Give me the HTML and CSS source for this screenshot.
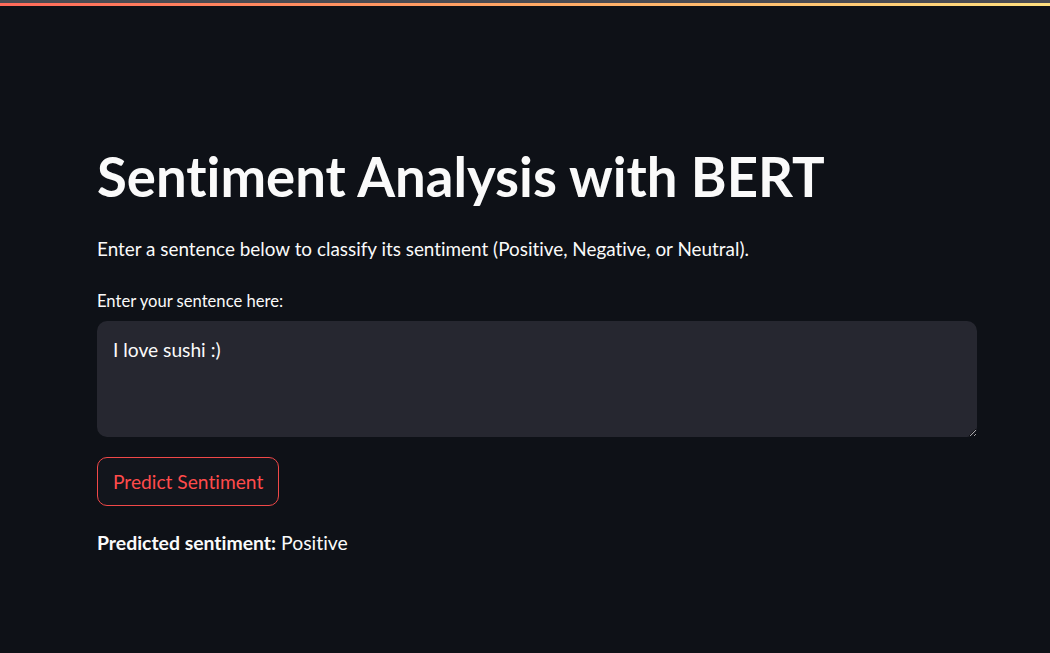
FILE: index.html
```html
<!DOCTYPE html>
<html lang="en">
<head>
<meta charset="utf-8">
<title>Sentiment Analysis with BERT</title>
<link rel="stylesheet" href="styles.css">
</head>
<body>
<div class="topbar"></div>
<div class="decoration"></div>
<main class="main">
  <h1 class="title">Sentiment Analysis with BERT</h1>
  <p class="intro">Enter a sentence below to classify its sentiment (Positive, Negative, or Neutral).</p>
  <label class="label" for="sentence">Enter your sentence here:</label>
  <textarea id="sentence" class="input">I love sushi :)</textarea>
  <button class="btn" type="button">Predict Sentiment</button>
  <p class="result"><strong>Predicted sentiment:</strong> Positive</p>
</main>
</body>
</html>
```
FILE: styles.css
```css
html, body {
  margin: 0;
  padding: 0;
  background: #0e1117;
  height: 100%;
  overflow: hidden;
}
body {
  font-family: "Lato", "Open Sans", sans-serif;
  font-variant-ligatures: none;
  color: #fafafa;
}
.topbar {
  height: 3px;
  background: #4a4b52;
}
.decoration {
  height: 3px;
  background: linear-gradient(90deg, #ff6a5a 0%, #ffa865 50%, #ffe07f 100%);
}
.main {
  width: 880px;
  margin-left: 97px;
  padding-top: 138px;
  display: flex;
  flex-direction: column;
  align-items: flex-start;
}
.title {
  margin: 0;
  font-size: 54.5px;
  font-weight: 700;
  line-height: 64px;
}
.intro {
  margin: 26px 0 0;
  font-size: 18.9px;
  line-height: 30px;
}
.label {
  margin-top: 27px;
  font-size: 16.6px;
  line-height: 20px;
}
.input {
  margin-top: 10px;
  box-sizing: border-box;
  width: 880px;
  height: 116px;
  background: #262730;
  border: none;
  border-radius: 10px;
  color: #fafafa;
  font-family: inherit;
  font-variant-ligatures: none;
  font-size: 19.2px;
  line-height: 26px;
  padding: 16px 16px;
  outline: none;
  resize: vertical;
}
.btn {
  margin-top: 20px;
  box-sizing: border-box;
  height: 49px;
  padding: 0 15px;
  background: #12151c;
  border: 1px solid #f04848;
  border-radius: 10px;
  color: #ff4b4b;
  font-family: inherit;
  font-variant-ligatures: none;
  font-size: 19.2px;
}
.result {
  margin: 22px 0 0;
  font-size: 19.4px;
  line-height: 30px;
}
.result strong {
  font-weight: 700;
}
```
